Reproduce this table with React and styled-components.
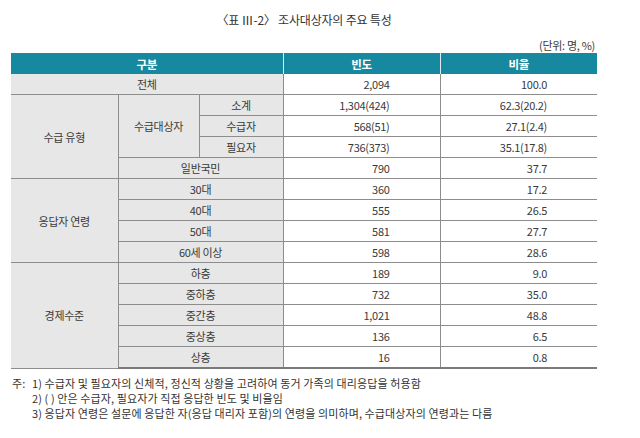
import React from "react";
import styled, { createGlobalStyle } from "styled-components";

const Global = createGlobalStyle`
  html, body { margin: 0; padding: 0; background: #fff; }
  body { font-family: "Noto Sans CJK KR", "Noto Sans", sans-serif; color: #3a3a3a; }
`;

const Page = styled.div`
  width: 586px;
  padding: 12px 0 0 11px;
  display: flex;
  flex-direction: column;
`;

const Title = styled.div`
  text-align: center;
  font-size: 12px;
  line-height: 16px;
  color: #333;
  letter-spacing: -0.2px;
`;

const Unit = styled.div`
  margin-top: 10px;
  text-align: right;
  font-size: 11px;
  line-height: 14px;
  padding-right: 2px;
  letter-spacing: -0.3px;
`;

const Table = styled.table`
  margin-top: 1px;
  width: 586px;
  border-collapse: collapse;
  table-layout: fixed;
  font-size: 11px;
  letter-spacing: -0.3px;
`;

const Th = styled.th`
  height: 21px;
  padding: 0;
  background: #1689a0;
  color: #fff;
  font-weight: bold;
  font-size: 11.5px;
  border-left: ${(p) => (p.$first ? "none" : "1px solid #d8eef2")};
`;

const Label = styled.td`
  height: 20px;
  padding: 0;
  background: #e7e7e7;
  text-align: center;
  border-bottom: 1px solid #8d8d8d;
  border-left: ${(p) => (p.$first ? "none" : "1px solid #8d8d8d")};
`;

const Num = styled.td`
  height: 20px;
  padding: 0 ${(p) => p.$pad}px 0 0;
  text-align: right;
  background: #fff;
  border-bottom: 1px solid #8d8d8d;
  border-left: 1px solid #8d8d8d;
`;

const LastRow = styled.tr`
  td { border-bottom: 2px solid #7a7a7a; }
`;

const Notes = styled.div`
  margin-top: 7px;
  display: grid;
  grid-template-columns: 21px 1fr;
  font-size: 11px;
  line-height: 15px;
  letter-spacing: 0.1px;
  color: #333;
`;

const NoteHead = styled.span`
  padding-left: 1px;
`;

const rows = [
  { kind: "top", label: "전체", f: "2,094", r: "100.0" },
  { kind: "sub1", g: "수급 유형", s: "수급대상자", label: "소계", f: "1,304(424)", r: "62.3(20.2)" },
  { kind: "sub", label: "수급자", f: "568(51)", r: "27.1(2.4)" },
  { kind: "sub", label: "필요자", f: "736(373)", r: "35.1(17.8)" },
  { kind: "wide", label: "일반국민", f: "790", r: "37.7" },
  { kind: "grp", g: "응답자 연령", span: 4, label: "30대", f: "360", r: "17.2" },
  { kind: "wide", label: "40대", f: "555", r: "26.5" },
  { kind: "wide", label: "50대", f: "581", r: "27.7" },
  { kind: "wide", label: "60세 이상", f: "598", r: "28.6" },
  { kind: "grp", g: "경제수준", span: 5, label: "하층", f: "189", r: "9.0" },
  { kind: "wide", label: "중하층", f: "732", r: "35.0" },
  { kind: "wide", label: "중간층", f: "1,021", r: "48.8" },
  { kind: "wide", label: "중상층", f: "136", r: "6.5" },
  { kind: "wide", label: "상층", f: "16", r: "0.8", last: true },
];

function Row({ row }) {
  const cells = [];
  if (row.kind === "top") {
    cells.push(<Label key="l" colSpan={3} $first>{row.label}</Label>);
  } else if (row.kind === "sub1") {
    cells.push(<Label key="g" rowSpan={4} $first>{row.g}</Label>);
    cells.push(<Label key="s" rowSpan={3}>{row.s}</Label>);
    cells.push(<Label key="l">{row.label}</Label>);
  } else if (row.kind === "sub") {
    cells.push(<Label key="l">{row.label}</Label>);
  } else if (row.kind === "grp") {
    cells.push(<Label key="g" rowSpan={row.span} $first>{row.g}</Label>);
    cells.push(<Label key="l" colSpan={2}>{row.label}</Label>);
  } else {
    cells.push(<Label key="l" colSpan={2}>{row.label}</Label>);
  }
  cells.push(<Num key="f" $pad={50}>{row.f}</Num>);
  cells.push(<Num key="r" $pad={50}>{row.r}</Num>);
  const R = row.last ? LastRow : "tr";
  return <R>{cells}</R>;
}

export default function App() {
  return (
    <>
      <Global />
      <Page>
        <Title>〈표 Ⅲ-2〉 조사대상자의 주요 특성</Title>
        <Unit>(단위: 명, %)</Unit>
        <Table>
          <colgroup>
            <col style={{ width: 107 }} />
            <col style={{ width: 81 }} />
            <col style={{ width: 84 }} />
            <col style={{ width: 157 }} />
            <col style={{ width: 157 }} />
          </colgroup>
          <thead>
            <tr>
              <Th colSpan={3} $first>구분</Th>
              <Th>빈도</Th>
              <Th>비율</Th>
            </tr>
          </thead>
          <tbody>
            {rows.map((r, i) => (
              <Row key={i} row={r} />
            ))}
          </tbody>
        </Table>
        <Notes>
          <NoteHead>주:</NoteHead>
          <span>1) 수급자 및 필요자의 신체적, 정신적 상황을 고려하여 동거 가족의 대리응답을 허용함</span>
          <span />
          <span>2) ( ) 안은 수급자, 필요자가 직접 응답한 빈도 및 비율임</span>
          <span />
          <span>3) 응답자 연령은 설문에 응답한 자(응답 대리자 포함)의 연령을 의미하며, 수급대상자의 연령과는 다름</span>
        </Notes>
      </Page>
    </>
  );
}
